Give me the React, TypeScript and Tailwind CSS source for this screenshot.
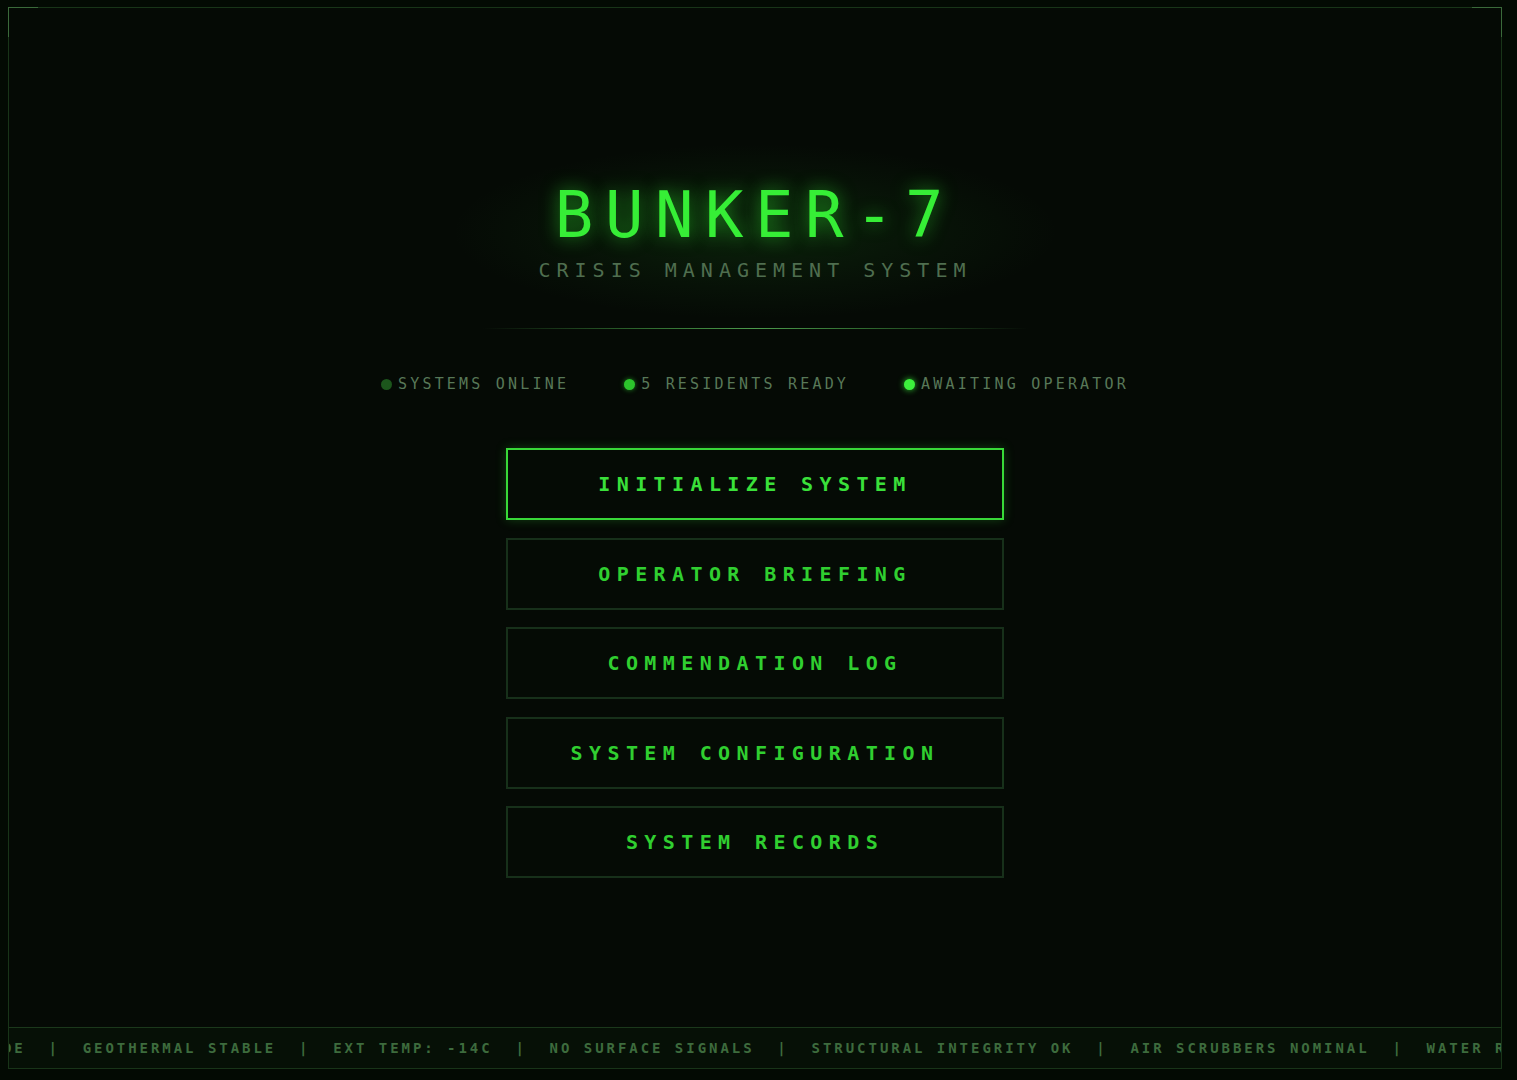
import React from 'react';

const mono = { fontFamily: '"DejaVu Sans Mono", "Liberation Mono", monospace' };

const menuItems = [
  'INITIALIZE SYSTEM',
  'OPERATOR BRIEFING',
  'COMMENDATION LOG',
  'SYSTEM CONFIGURATION',
  'SYSTEM RECORDS',
];

const tickerItems = [
  'STANDBY MODE',
  'GEOTHERMAL STABLE',
  'EXT TEMP: -14C',
  'NO SURFACE SIGNALS',
  'STRUCTURAL INTEGRITY OK',
  'AIR SCRUBBERS NOMINAL',
  'WATER RECLAMATION ACTIVE',
];

function StatusItem({ label, dot }: { label: string; dot: string }) {
  return (
    <div className="flex items-center gap-[6px]">
      <span className={`h-[11px] w-[11px] rounded-full ${dot}`} />
      <span className="text-[15px] leading-none tracking-[3.2px] text-[#587858]">{label}</span>
    </div>
  );
}

export default function App() {
  return (
    <div className="min-h-[1080px] bg-[#030a03] pt-[7px] pr-[15px] pb-[11px] pl-[8px]" style={mono}>
      <div className="relative flex h-[1062px] flex-col border border-[#183418] bg-[#050a05]">
        {/* corner accents */}
        <span className="absolute -left-px -top-px h-[30px] w-[30px] border-l border-t border-[#3a6a3a]" />
        <span className="absolute -right-px -top-px h-[30px] w-[30px] border-r border-t border-[#3a6a3a]" />

        <main className="flex flex-1 flex-col items-center pt-[175px]">
          <div className="-my-[40px] flex flex-col items-center bg-[radial-gradient(ellipse_at_center,rgba(40,150,40,0.17)_0%,rgba(40,140,40,0.06)_45%,transparent_70%)] px-[90px] py-[40px]">
            <h1 className="h-[64px] text-[64px] leading-none tracking-[11.5px] text-[#36ee36] [text-shadow:0_0_18px_rgba(50,255,50,0.55)]">
              BUNKER-7
            </h1>
            <p className="mt-[13px] text-[20px] leading-none tracking-[6px] text-[#4f6e4f]">
              CRISIS MANAGEMENT SYSTEM
            </p>
          </div>

          <div className="mt-[48px] h-px w-[545px] bg-[linear-gradient(90deg,transparent,#2f6a2f_30%,#4c9a4c_50%,#2f6a2f_70%,transparent)]" />

          <div className="mt-[48px] flex items-center gap-[55px]">
            <StatusItem label="SYSTEMS ONLINE" dot="bg-[#1c561c]" />
            <StatusItem label="5 RESIDENTS READY" dot="bg-[#2cc42c] shadow-[0_0_5px_rgba(50,220,50,0.6)]" />
            <StatusItem label="AWAITING OPERATOR" dot="bg-[#3cf03c] shadow-[0_0_6px_rgba(60,255,60,0.8)]" />
          </div>

          <div className="mt-[56px] flex flex-col gap-[17.5px]">
            {menuItems.map((item, i) => (
              <button
                key={item}
                className={`flex h-[72px] w-[498px] items-center justify-center bg-[#050b05] text-[20px] font-bold leading-none tracking-[6.4px] ${
                  i === 0
                    ? 'border-2 border-[#38d838] text-[#3ae03a] shadow-[0_0_10px_rgba(50,220,50,0.25)]'
                    : 'border-2 border-[#17301a] text-[#30cf30]'
                }`}
                style={mono}
              >
                {item}
              </button>
            ))}
          </div>
        </main>

        <div className="h-[41px] overflow-hidden border-t border-[#1b381b] bg-[#061006]">
          <div className="ml-[-120px] flex h-full items-center whitespace-pre text-[14px] font-bold leading-none tracking-[2.96px] text-[#3d6b3d]">
            {tickerItems.map((t, i) => (
              <span key={t}>
                {i > 0 ? '  |  ' : ''}
                {t}
              </span>
            ))}
          </div>
        </div>
      </div>
    </div>
  );
}
